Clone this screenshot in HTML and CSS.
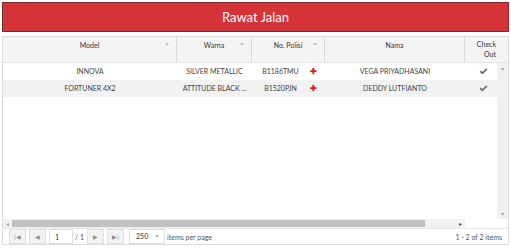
FILE: index.html
```html
<!DOCTYPE html>
<html lang="id">
<head>
    <meta charset="UTF-8">
    <title>Rawat Jalan</title>
    <link rel="stylesheet" href="styles.css">
</head>
<body>
    <div class="title-bar">Rawat Jalan</div>

    <div class="grid">
        <div class="grid-header">
            <div class="th col-model">Model <span class="sort">&#8964;</span></div>
            <div class="th col-warna">Warna <span class="sort">&#8964;</span></div>
            <div class="th col-polisi">No. Polisi <span class="sort">&#8964;</span></div>
            <div class="th col-nama">Nama</div>
            <div class="th col-check">Check<br>Out</div>
        </div>

        <div class="grid-body">
            <div class="rows">
                <div class="row">
                    <div class="td col-model">INNOVA</div>
                    <div class="td col-warna">SILVER METALLIC</div>
                    <div class="td col-polisi">B1186TMU <span class="plus">&#10010;</span></div>
                    <div class="td col-nama">VEGA PRIYADHASANI</div>
                    <div class="td col-check">
                        <svg class="check" viewBox="0 0 10 8" width="9" height="7"><path d="M0.5 4.2 L2 2.8 L3.8 4.6 L8.2 0.3 L9.6 1.7 L3.8 7.4 Z" fill="#6f6f6f"/></svg>
                    </div>
                </div>
                <div class="row alt">
                    <div class="td col-model">FORTUNER 4X2</div>
                    <div class="td col-warna">ATTITUDE BLACK ...</div>
                    <div class="td col-polisi">B1520PJN <span class="plus">&#10010;</span></div>
                    <div class="td col-nama">DEDDY LUTFIANTO</div>
                    <div class="td col-check">
                        <svg class="check" viewBox="0 0 10 8" width="9" height="7"><path d="M0.5 4.2 L2 2.8 L3.8 4.6 L8.2 0.3 L9.6 1.7 L3.8 7.4 Z" fill="#6f6f6f"/></svg>
                    </div>
                </div>
            </div>
            <div class="vscroll">
                <span class="arrow">&#9652;</span>
                <span class="arrow">&#9662;</span>
            </div>
        </div>

        <div class="hscroll-row">
            <div class="hscroll">
                <span class="arrow">&#9666;</span>
                <div class="thumb"></div>
                <span class="arrow dark">&#9656;</span>
            </div>
        </div>

        <div class="pager">
            <div class="pager-left">
                <button class="pbtn">|&#9664;</button>
                <button class="pbtn">&#9664;</button>
                <input class="page-input" type="text" value="1">
                <span class="page-total">/ 1</span>
                <button class="pbtn">&#9654;</button>
                <button class="pbtn">&#9654;|</button>
                <div class="page-size">250 <span class="caret">&#8964;</span></div>
                <span class="per-page">items per page</span>
            </div>
            <div class="pager-info">1 - 2 of 2 items</div>
        </div>
    </div>
</body>
</html>
```

FILE: styles.css
```css
/* dasar */
* {
    box-sizing: border-box;
    margin: 0;
    padding: 0;
    font-family: 'Lato', 'Liberation Sans', sans-serif;
}

body {
    background-color: #fff;
    color: #333;
    padding: 2px 2px 0 2px;
    width: 511px;
}

.title-bar {
    height: 30px;
    background-color: #d63339;
    border: 1px solid #7e2a2c;
    color: #fff;
    font-size: 13px;
    text-align: center;
    line-height: 28px;
}

.grid {
    margin-top: 4px;
    border: 1px solid #dcdcdc;
    height: 209px;
    display: flex;
    flex-direction: column;
}

.grid-header {
    display: flex;
    height: 26px;
    background-color: #f4f4f4;
    border-bottom: 1px solid #e4e4e4;
    padding-right: 8px;
}

.th {
    position: relative;
    font-size: 7px;
    color: #333;
    text-align: center;
    padding-top: 4px;
    border-right: 1px solid #d8d8d8;
}

.th .sort {
    position: absolute;
    right: 6px;
    top: 1px;
    font-size: 7px;
    color: #777;
}

.th.col-check {
    border-right: none;
    text-align: right;
    padding-right: 4px;
    line-height: 10px;
    padding-top: 2px;
}

.col-model { width: 174px; }
.col-warna { width: 75px; }
.col-polisi { width: 73px; }
.col-nama { width: 140px; }
.col-check { flex: 1; }

.grid-body {
    display: flex;
    height: 156px;
}

.rows {
    flex: 1;
}

.row {
    display: flex;
    height: 17px;
}

.row.alt {
    background-color: #f2f2f2;
}

.td {
    font-size: 7px;
    color: #444;
    text-align: center;
    line-height: 17px;
    white-space: nowrap;
    overflow: hidden;
}

.td.col-polisi {
    position: relative;
    padding-right: 16px;
}

.td.col-check {
    display: flex;
    align-items: center;
    justify-content: center;
    padding-left: 4px;
}

.plus {
    position: absolute;
    right: 8px;
    top: 0;
    color: #e8141b;
    font-size: 8px;
    font-weight: bold;
}

.vscroll {
    width: 11px;
    background-color: #f1f1f1;
    display: flex;
    flex-direction: column;
    justify-content: space-between;
    align-items: center;
    padding: 2px 0;
}

.arrow {
    font-size: 6px;
    color: #a3a3a3;
    line-height: 6px;
}

.arrow.dark {
    color: #555;
}

.hscroll-row {
    height: 9px;
    display: flex;
}

.hscroll {
    width: 462px;
    background-color: #f1f1f1;
    display: flex;
    align-items: center;
    padding: 0 3px;
    gap: 3px;
}

.hscroll .thumb {
    width: 413px;
    height: 7px;
    background-color: #c1c1c1;
}

.hscroll .arrow.dark {
    margin-left: 31px;
}

.pager {
    flex: 1;
    display: flex;
    align-items: center;
    justify-content: space-between;
    padding: 0 6px 0 6px;
    border-top: 1px solid #e8e8e8;
}

.pager-left {
    display: flex;
    align-items: center;
}

.pbtn {
    width: 17px;
    height: 15px;
    border: 1px solid #e0e0e0;
    background-color: #f2f2f2;
    color: #8a8a8a;
    font-size: 6px;
    margin-right: 3px;
}

.page-input {
    width: 24px;
    height: 15px;
    border: 1px solid #ddd;
    font-size: 7px;
    padding-left: 5px;
    color: #333;
}

.page-total {
    font-size: 7px;
    color: #555;
    margin: 0 3px 0 2px;
}

.page-size {
    margin-left: 2px;
    width: 36px;
    height: 15px;
    border: 1px solid #ddd;
    font-size: 7px;
    line-height: 13px;
    padding-left: 6px;
    color: #333;
    position: relative;
}

.page-size .caret {
    position: absolute;
    right: 4px;
    top: -2px;
    color: #555;
}

.per-page {
    font-size: 7px;
    color: #555;
    margin-left: 2px;
}

.pager-info {
    font-size: 7px;
    color: #555;
}
```
